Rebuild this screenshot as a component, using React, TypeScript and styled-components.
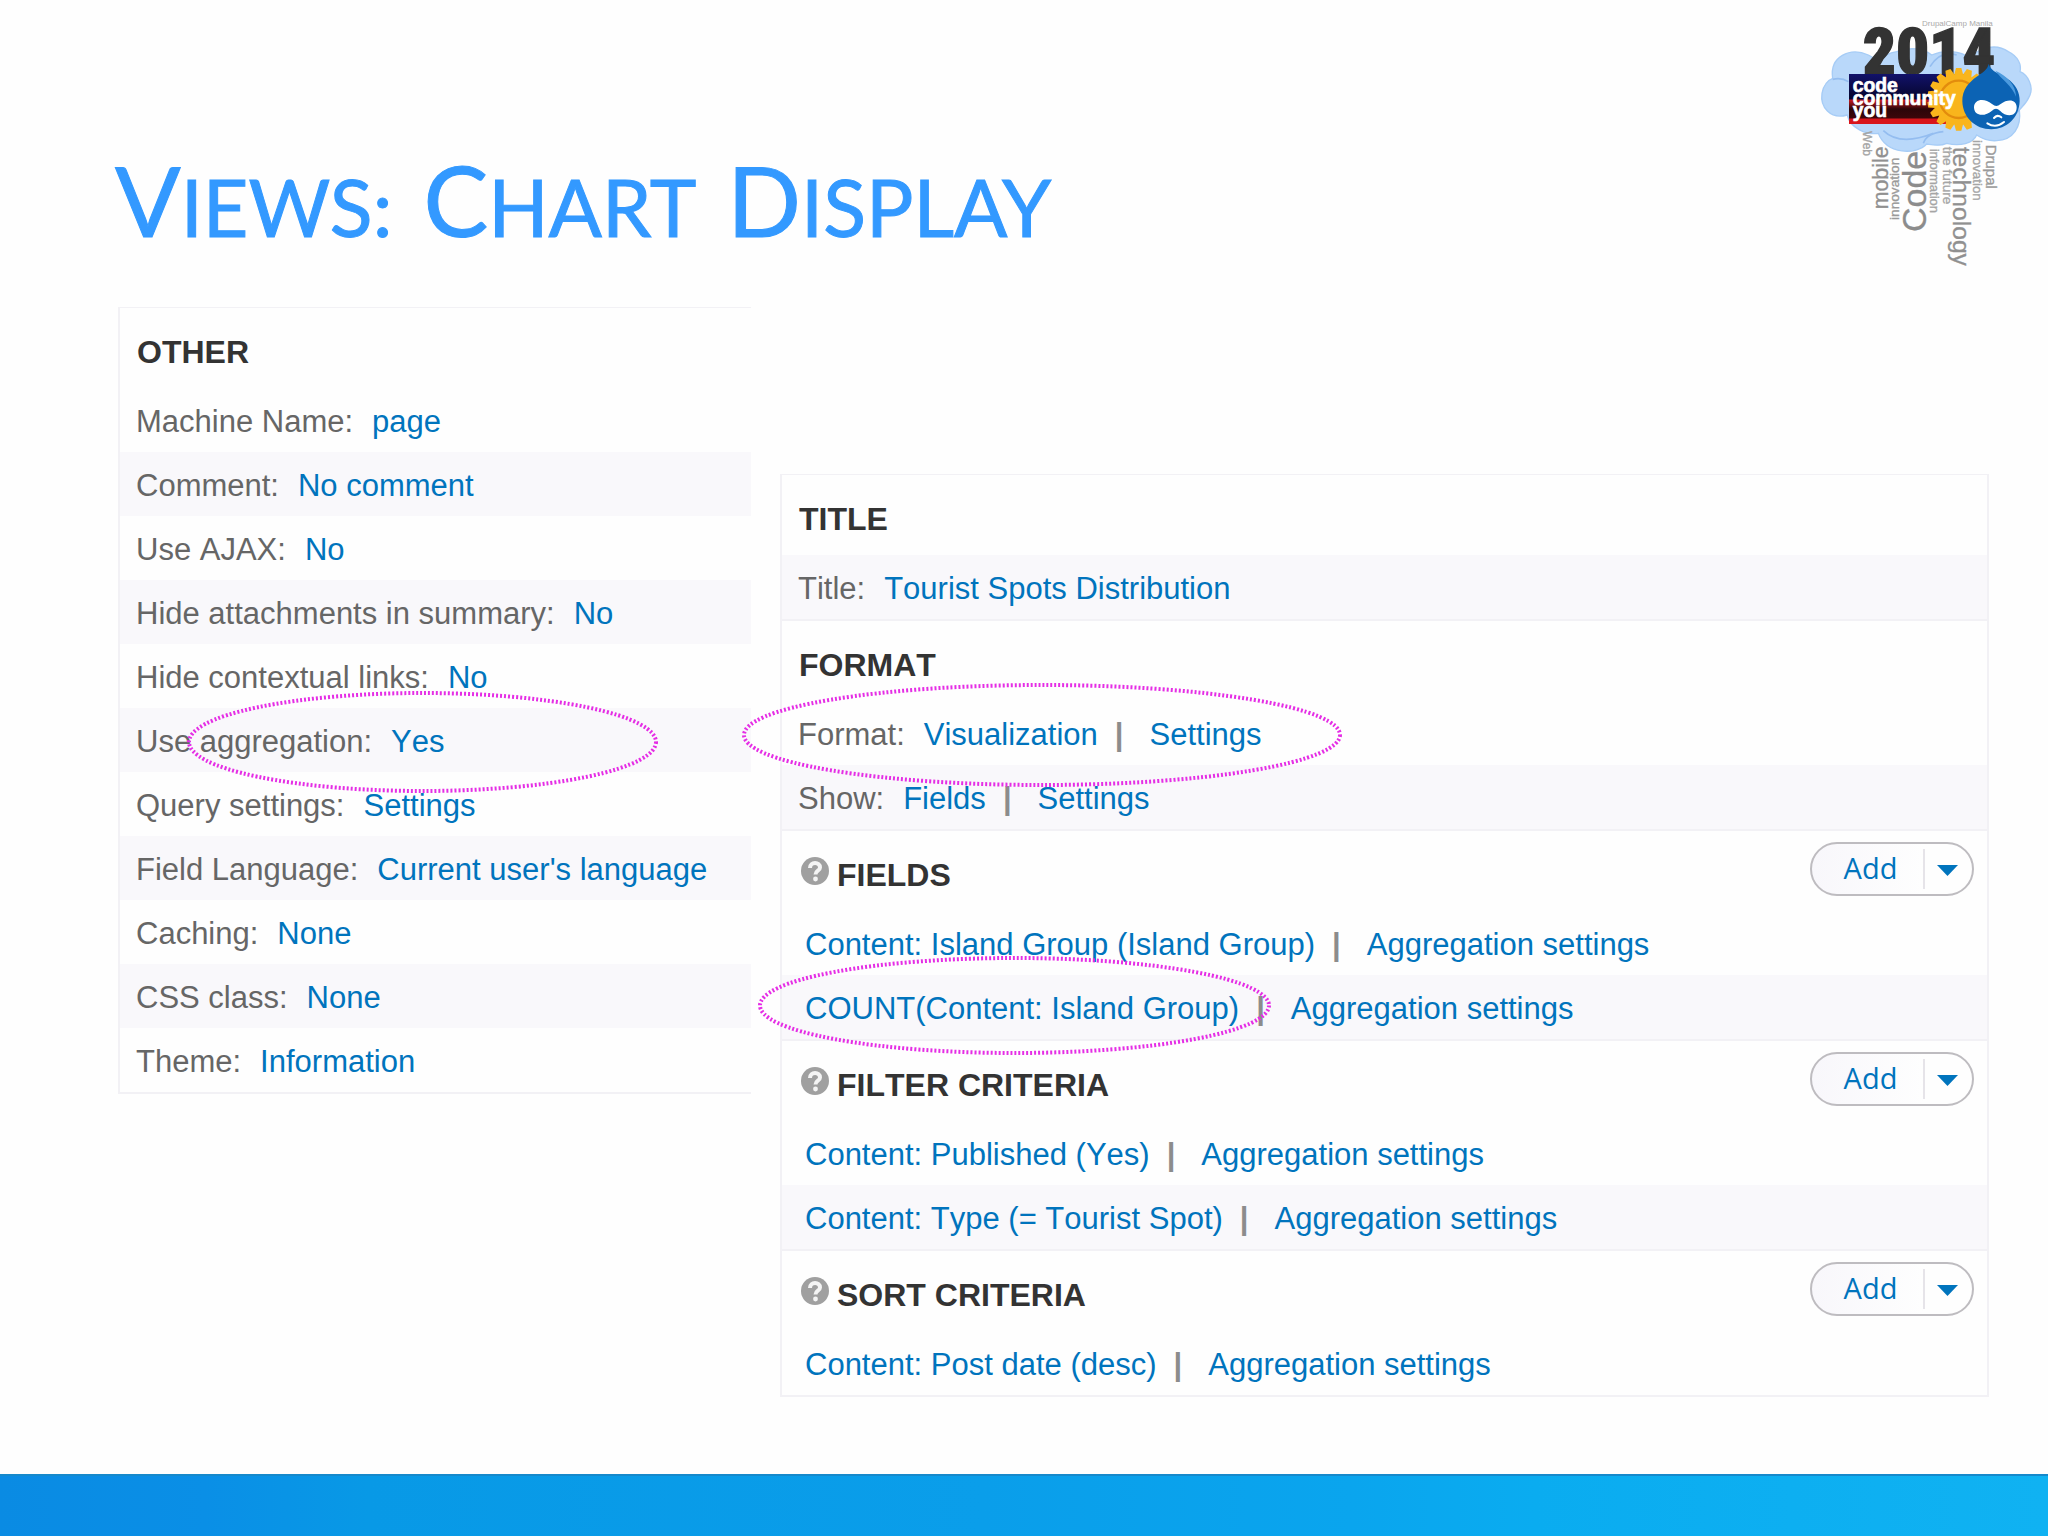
import React from "react";
import styled, { createGlobalStyle } from "styled-components";

const GlobalStyle = createGlobalStyle`
  *, *::before, *::after { box-sizing: border-box; }
  body {
    margin: 0;
    background: #fefefe;
    color: #666;
    font-family: "Liberation Sans", Arial, sans-serif;
    font-size: 31px;
    font-kerning: none;
  }
`;

const Slide = styled.div`
  min-height: 100vh;
  display: flex;
  flex-direction: column;
`;

const Header = styled.header`
  display: flex;
  justify-content: space-between;
  align-items: flex-start;
  padding-left: 115px;
  height: 307px;
`;

const Title = styled.h1`
  display: flex;
  gap: 31px;
  margin: 0;
  padding-top: 140px;
  color: #3399ff;
  -webkit-text-stroke: 1px #3399ff;
  font-family: Lato, sans-serif;
  font-kerning: normal;
  font-weight: 400;
  font-size: 79px;
  line-height: 120px;
  text-transform: uppercase;
`;

const Word = styled.span`
  display: block;
  &::first-letter { font-size: 97px; }
`;

const LogoArt = styled.svg`
  flex: none;
  width: 248px;
  height: 280px;
`;

const Main = styled.main`
  flex: 1;
  display: grid;
  grid-template-columns: minmax(0, 633fr) minmax(0, 1209fr);
  column-gap: 29px;
  align-items: start;
  padding: 0 59px 76px 118px;
`;

const Panel = styled.div<{ $side: "left" | "right" }>`
  border: 2px solid #f2f1f5;
  border-top-width: 1px;
  ${({ $side }) => ($side === "left" ? "border-right: 0;" : "margin-top: 167px; border-bottom: 0;")}
`;

const Section = styled.section<{ $ruled?: boolean }>`
  border-bottom: ${({ $ruled }) => ($ruled ? "2px solid #f2f1f5" : "0")};
`;

const SectionHead = styled.div`
  display: flex;
  align-items: center;
  height: 80px;
  padding: 0 13px 0 17px;
`;

const Heading = styled.h2`
  margin: 0;
  padding-top: 8px;
  color: #333;
  font-size: 32px;
  font-weight: 700;
  line-height: 72px;
`;

const HelpIcon = styled.svg`
  flex: none;
  width: 28px;
  height: 28px;
  margin: 0 8px 0 2px;
`;

const Rows = styled.ul`
  list-style: none;
  margin: 0;
  padding: 0;
`;

const Row = styled.li<{ $shaded?: boolean; $indent?: boolean }>`
  position: relative;
  display: flex;
  align-items: center;
  height: 64px;
  padding: 4px 0 0 ${({ $indent }) => ($indent ? 23 : 16)}px;
  background: ${({ $shaded }) => ($shaded ? "#f9f8fb" : "transparent")};
  line-height: 60px;
  white-space: nowrap;
`;

const Label = styled.span`
  margin-right: 19px;
`;

const SettingLink = styled.a`
  color: #0074bd;
  text-decoration: none;
`;

const Bar = styled.span`
  margin: 0 26px 0 17px;
  color: #8c8c8c;
  font-weight: 700;
`;

const SplitButton = styled.div`
  display: flex;
  align-self: flex-start;
  align-items: center;
  width: 164px;
  height: 54px;
  margin: 11px 0 0 auto;
  border: 2px solid #bebcc0;
  border-radius: 27px;
  background: linear-gradient(90deg, #f8f7fb, #fefefe 70%);
`;

const AddButton = styled.button`
  flex: 1;
  padding: 0 0 3px 6px;
  border: 0;
  background: none;
  color: #0074bd;
  font-family: "Open Sans", sans-serif;
  font-size: 29px;
  line-height: 46px;
`;

const MoreButton = styled.button`
  display: flex;
  align-items: center;
  width: 49px;
  height: 40px;
  padding: 2px 0 0 12px;
  border: 0;
  border-left: 2px solid #e6e4e9;
  background: none;
`;

const RingArt = styled.svg<{ $x: number; $y: number }>`
  position: absolute;
  z-index: 1;
  left: ${({ $x }) => $x}px;
  top: ${({ $y }) => $y}px;
  pointer-events: none;
`;

const Footer = styled.footer`
  height: 62px;
  border-top: 2px solid #1689cb;
  background: linear-gradient(90deg, #0a8be3 0%, #0a8fe6 10%, #0899e6 18%, #0a9eea 48%, #0aa5ee 66%, #0aacf0 75%, #10b2f2 100%);
`;

type RingProps = { x: number; y: number; width: number; height: number };

function Ring({ x, y, width, height }: RingProps) {
  return (
    <RingArt $x={x} $y={y} width={width + 6} height={height + 6} aria-hidden="true">
      <ellipse
        cx={width / 2 + 3}
        cy={height / 2 + 3}
        rx={width / 2}
        ry={height / 2}
        fill="none"
        stroke="#e52ee5"
        strokeWidth="4"
        strokeDasharray="2 2"
      />
    </RingArt>
  );
}

type Item = { label?: string; links: string[]; ring?: RingProps };
type Group = { title: string; help?: boolean; firstShaded?: boolean; items: Item[] };

const other: Group = {
  title: "OTHER",
  items: [
    { label: "Machine Name:", links: ["page"] },
    { label: "Comment:", links: ["No comment"] },
    { label: "Use AJAX:", links: ["No"] },
    { label: "Hide attachments in summary:", links: ["No"] },
    { label: "Hide contextual links:", links: ["No"] },
    { label: "Use aggregation:", links: ["Yes"], ring: { x: 66, y: -18, width: 467, height: 98 } },
    { label: "Query settings:", links: ["Settings"] },
    { label: "Field Language:", links: ["Current user's language"] },
    { label: "Caching:", links: ["None"] },
    { label: "CSS class:", links: ["None"] },
    { label: "Theme:", links: ["Information"] },
  ],
};

const groups: Group[] = [
  { title: "TITLE", firstShaded: true, items: [{ label: "Title:", links: ["Tourist Spots Distribution"] }] },
  {
    title: "FORMAT",
    items: [
      {
        label: "Format:",
        links: ["Visualization", "Settings"],
        ring: { x: -41, y: -19, width: 596, height: 100 },
      },
      { label: "Show:", links: ["Fields", "Settings"] },
    ],
  },
  {
    title: "FIELDS",
    help: true,
    items: [
      { links: ["Content: Island Group (Island Group)", "Aggregation settings"] },
      {
        links: ["COUNT(Content: Island Group)", "Aggregation settings"],
        ring: { x: -25, y: -20, width: 509, height: 95 },
      },
    ],
  },
  {
    title: "FILTER CRITERIA",
    help: true,
    items: [
      { links: ["Content: Published (Yes)", "Aggregation settings"] },
      { links: ["Content: Type (= Tourist Spot)", "Aggregation settings"] },
    ],
  },
  {
    title: "SORT CRITERIA",
    help: true,
    items: [{ links: ["Content: Post date (desc)", "Aggregation settings"] }],
  },
];

function SettingsGroup({ group, ruled }: { group: Group; ruled?: boolean }) {
  return (
    <Section $ruled={ruled}>
      <SectionHead>
        {group.help && (
          <HelpIcon viewBox="0 0 28 28" aria-hidden="true">
            <circle cx="14" cy="14" r="14" fill="#a0a0a0" />
            <path d="M9 11C9 4.500 19 4.500 19 10.500C19 14 14.500 13.500 14.500 17.500" fill="none" stroke="#f4f4f4" strokeWidth="4" />
            <circle cx="14.500" cy="22" r="2.400" fill="#f4f4f4" />
          </HelpIcon>
        )}
        <Heading>{group.title}</Heading>
        {group.help && (
          <SplitButton>
            <AddButton type="button">Add</AddButton>
            <MoreButton type="button" aria-label="More options">
              <svg width="21" height="11" viewBox="0 0 21 11" aria-hidden="true">
                <path d="M0 0H21L10.500 11Z" fill="#0074bd" />
              </svg>
            </MoreButton>
          </SplitButton>
        )}
      </SectionHead>
      <Rows>
        {group.items.map((item, i) => (
          <Row key={i} $shaded={group.firstShaded ? i % 2 === 0 : i % 2 === 1} $indent={!item.label}>
            {item.label && <Label>{item.label}</Label>}
            {item.links.map((link, j) => (
              <React.Fragment key={j}>
                {j > 0 && <Bar>|</Bar>}
                <SettingLink href="#">{link}</SettingLink>
              </React.Fragment>
            ))}
            {item.ring && <Ring {...item.ring} />}
          </Row>
        ))}
      </Rows>
    </Section>
  );
}

const cloudWords = [
  { text: "Web", x: 190, y: 394, size: 36, fill: "#a5a5a5" },
  { text: "mobile", x: 219, y: 628, size: 64, fill: "#909090", up: true },
  { text: "innovation", x: 269, y: 660, size: 41, fill: "#9a9a9a", up: true },
  { text: "Code", x: 304, y: 696, size: 102, fill: "#8c8c8c", up: true },
  { text: "information", x: 390, y: 446, size: 39, fill: "#a5a5a5" },
  { text: "the future", x: 430, y: 440, size: 41, fill: "#a5a5a5" },
  { text: "technology", x: 460, y: 440, size: 74, fill: "#909090" },
  { text: "innovation", x: 518, y: 420, size: 40, fill: "#a5a5a5" },
  { text: "Drupal", x: 558, y: 434, size: 45, fill: "#9a9a9a" },
];

function Logo() {
  const teeth = Array.from({ length: 18 }, (_, i) => i * 20);
  return (
    <LogoArt viewBox="0 0 744 840" role="img" aria-label="DrupalCamp 2014: code community you">
      <path
        d="M98 235C88 170 150 140 205 165C240 190 250 160 290 155C330 140 370 145 395 165C430 150 480 150 510 175C540 140 590 130 625 155C655 170 665 195 660 215C685 225 700 260 690 285C680 310 665 322 658 330C665 380 640 420 590 422C565 424 545 415 530 405C520 430 480 440 440 430C420 440 400 435 380 432C350 465 260 465 235 400C200 405 150 385 142 345C90 360 60 320 66 280C70 255 85 240 98 235Z"
        fill="#b9d8fa"
        stroke="#a6ccf6"
        strokeWidth="4"
      />
      <path
        d="M250 392Q300 440 400 400M370 430Q380 400 430 395M390 200Q420 150 470 165M98 238Q125 232 145 245M658 330Q640 350 620 352"
        fill="none"
        stroke="#94bdf0"
        strokeWidth="5"
      />
      <text x="366" y="78" fontSize="24" fill="#aaa">DrupalCamp Manila</text>
      <text x="188" y="221" fontSize="195" fontWeight="900" fontFamily="'Roboto Condensed', Roboto, sans-serif" fill="#333" stroke="#333" strokeWidth="4">2014</text>
      <defs>
        <linearGradient id="banner" x1="0" y1="0" x2="0" y2="1">
          <stop offset="0" stopColor="#12126a" />
          <stop offset="0.5" stopColor="#05052c" />
          <stop offset="0.52" stopColor="#c51a20" />
          <stop offset="0.7" stopColor="#2c0509" />
          <stop offset="0.88" stopColor="#3c060a" />
          <stop offset="0.9" stopColor="#d8151b" />
          <stop offset="1" stopColor="#d8151b" />
        </linearGradient>
      </defs>
      <rect x="147" y="222" width="350" height="150" fill="url(#banner)" />
      <g fill="#f9b51c">
        {teeth.map((angle) => (
          <path key={angle} d="M462 226L468 204H484L490 226Z" transform={`rotate(${angle} 476 298)`} />
        ))}
        <circle cx="476" cy="298" r="76" />
      </g>
      <circle cx="476" cy="298" r="56" fill="none" stroke="#e38c0d" strokeWidth="7" />
      <g fill="#fff" stroke="#fff" strokeWidth="2" fontSize="58" fontWeight="700" fontFamily="'Liberation Sans', sans-serif">
        <text x="158" y="275">code</text>
        <text x="158" y="314">community</text>
        <text x="158" y="350">you</text>
      </g>
      <path d="M566 192C574 216 600 222 622 236C646 252 660 276 659 304C657 354 620 388 574 388C526 388 488 352 487 304C486 268 508 246 530 230C548 218 562 210 566 192Z" fill="#0c63b4" />
      <path d="M586 212C620 226 648 256 648 290C636 256 606 240 586 212Z" fill="#4c9ade" />
      <path d="M522 322C522 298 552 292 576 312C586 320 592 320 602 312C626 294 650 300 650 322C650 352 618 352 600 332C592 324 584 324 576 332C556 350 522 350 522 322Z" fill="#fff" />
      <path d="M562 370Q588 386 612 366M582 354Q592 342 604 352" fill="none" stroke="#fff" strokeWidth="6" strokeLinecap="round" />
      {cloudWords.map((word, i) => (
        <text
          key={i}
          fontSize={word.size}
          fill={word.fill}
          stroke={word.fill}
          strokeWidth="1"
          dominantBaseline={word.up ? "hanging" : "auto"}
          transform={`translate(${word.x} ${word.y}) rotate(${word.up ? -90 : 90})`}
        >
          {word.text}
        </text>
      ))}
    </LogoArt>
  );
}

export default function App() {
  return (
    <Slide>
      <GlobalStyle />
      <Header>
        <Title>
          <Word>Views:</Word> <Word>Chart</Word> <Word>Display</Word>
        </Title>
        <Logo />
      </Header>
      <Main>
        <Panel $side="left">
          <SettingsGroup group={other} />
        </Panel>
        <Panel $side="right">
          {groups.map((group) => (
            <SettingsGroup key={group.title} group={group} ruled />
          ))}
        </Panel>
      </Main>
      <Footer />
    </Slide>
  );
}
